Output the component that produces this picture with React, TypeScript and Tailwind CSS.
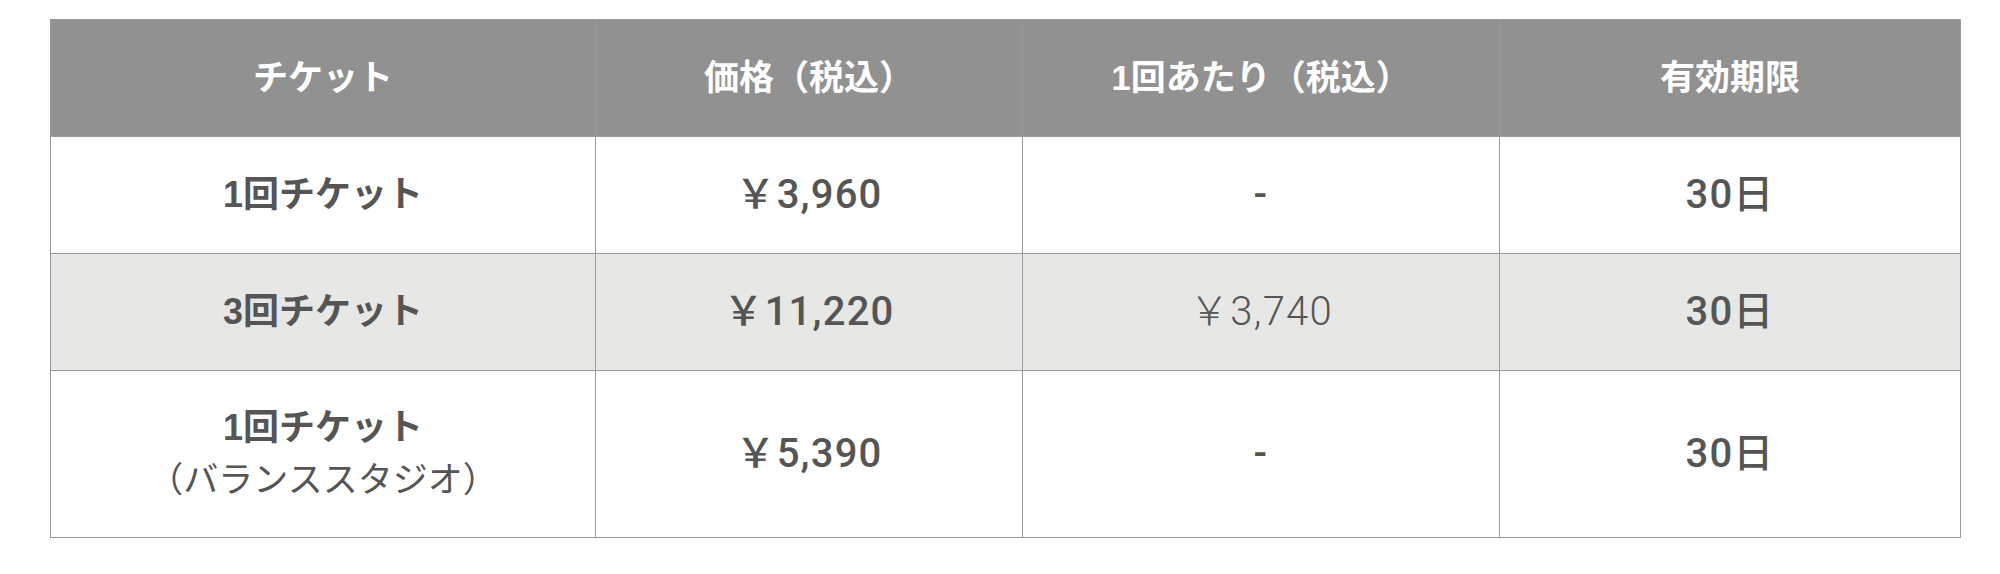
import React from "react";

type Row = {
  name: string;
  sub?: string;
  price: string;
  per: string;
  term: string;
  shaded?: boolean;
};

const rows: Row[] = [
  { name: "1回チケット", price: "￥3,960", per: "-", term: "30日" },
  { name: "3回チケット", price: "￥11,220", per: "￥3,740", term: "30日", shaded: true },
  { name: "1回チケット", sub: "（バランススタジオ）", price: "￥5,390", per: "-", term: "30日" },
];

const headers = ["チケット", "価格（税込）", "1回あたり（税込）", "有効期限"];

const App = () => {
  return (
    <div
      className="w-[2000px] h-[574px] bg-white pt-[19px] pl-[50px]"
      style={{ fontFamily: '"Liberation Sans", "Noto Sans CJK JP", sans-serif' }}
    >
      <table className="w-[1910px] table-fixed border-collapse border border-[#999999] text-[#555555]">
        <colgroup>
          <col className="w-[545px]" />
          <col className="w-[427px]" />
          <col className="w-[477px]" />
          <col className="w-[461px]" />
        </colgroup>
        <thead>
          <tr className="h-[117px] bg-[#919191]">
            {headers.map((h) => (
              <th
                key={h}
                className="border border-[#999999] text-center align-middle text-[35px] font-bold text-white"
              >
                {h}
              </th>
            ))}
          </tr>
        </thead>
        <tbody>
          {rows.map((r, i) => (
            <tr
              key={i}
              className={`${r.sub ? "h-[167px]" : "h-[117px]"} ${r.shaded ? "bg-[#e7e7e5]" : "bg-white"}`}
            >
              <td className="border border-[#999999] text-center align-middle">
                <div className="text-[36px] font-bold leading-[52px]">{r.name}</div>
                {r.sub && <div className="text-[35px] font-normal leading-[52px]">{r.sub}</div>}
              </td>
              <td className="border border-[#999999] text-center align-middle font-['Roboto','Noto_Sans_CJK_JP',sans-serif] text-[40px] font-medium tracking-[0.03em]">
                {r.price}
              </td>
              <td
                className={`border border-[#999999] text-center align-middle font-['Roboto','Noto_Sans_CJK_JP',sans-serif] text-[40px] tracking-[0.03em] ${
                  r.per === "-" ? "font-medium" : "font-light"
                }`}
              >
                {r.per}
              </td>
              <td className="border border-[#999999] text-center align-middle font-['Roboto','Noto_Sans_CJK_JP',sans-serif] text-[40px] font-medium tracking-[0.03em]">
                {r.term}
              </td>
            </tr>
          ))}
        </tbody>
      </table>
    </div>
  );
};

export default App;
